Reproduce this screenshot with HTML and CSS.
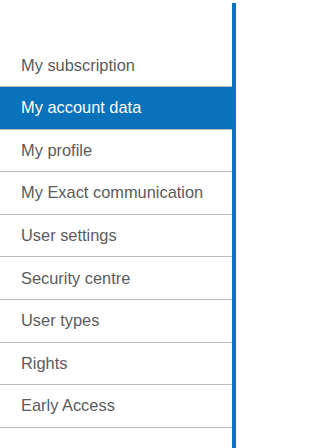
FILE: index.html
```html
<!DOCTYPE html>
<html>
<head>
<meta charset="utf-8">
<link rel="stylesheet" href="styles.css">
</head>
<body>
<nav class="side">
  <ul class="menu">
    <li class="item">My subscription</li>
    <li class="item active">My account data</li>
    <li class="item">My profile</li>
    <li class="item">My Exact communication</li>
    <li class="item">User settings</li>
    <li class="item">Security centre</li>
    <li class="item">User types</li>
    <li class="item">Rights</li>
    <li class="item">Early Access</li>
  </ul>
</nav>
</body>
</html>
```
FILE: styles.css
```css
html, body {
  margin: 0;
  padding: 0;
  background: #ffffff;
}
body {
  width: 236px;
  height: 448px;
  overflow: hidden;
  font-family: "Liberation Sans", Arial, sans-serif;
}
.side {
  margin-top: 3px;
  height: 445px;
  box-sizing: border-box;
  border-right: 4px solid #0a74bd;
}
.menu {
  list-style: none;
  margin: 0;
  padding: 41.4px 0 0 0;
}
.item {
  height: 41.6px;
  display: flex;
  align-items: center;
  padding-left: 21px;
  border-bottom: 1px solid #bdbdbd;
  font-size: 16.4px;
  color: #5b5b5b;
  white-space: nowrap;
}
.item.active {
  background: #0a72bb;
  color: #ffffff;
}
```
